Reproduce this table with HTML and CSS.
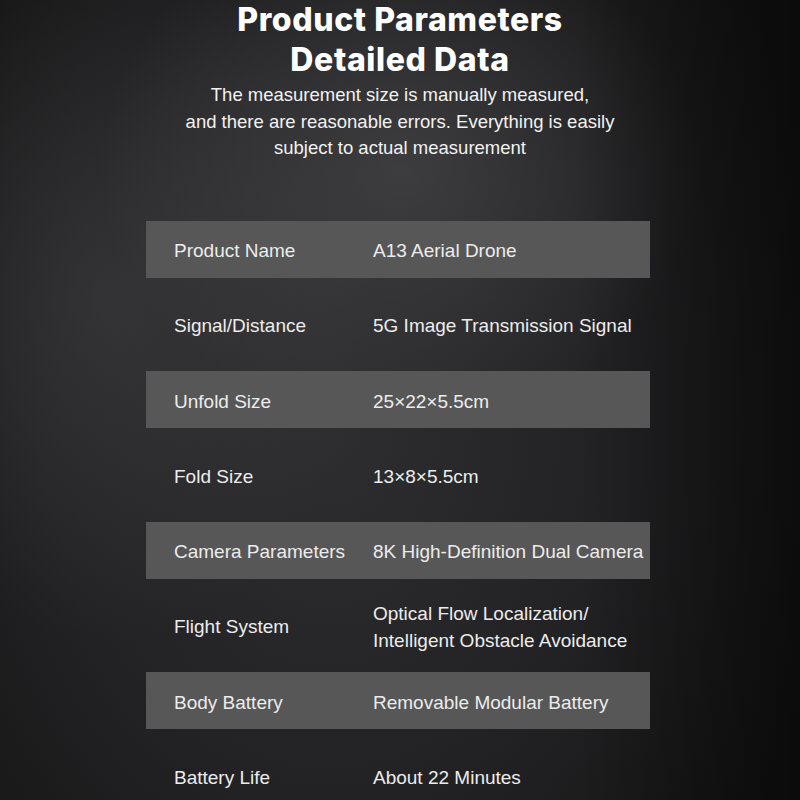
FILE: index.html
```html
<!DOCTYPE html>
<html lang="en">
<head>
<meta charset="utf-8">
<title>Product Parameters</title>
<link rel="stylesheet" href="styles.css">
</head>
<body>
<main class="page">
  <header class="intro">
    <h1 class="title">Product Parameters<br>Detailed Data</h1>
    <p class="note">The measurement size is manually measured,<br>and there are reasonable errors. Everything is easily<br>subject to actual measurement</p>
  </header>
  <section class="specs">
    <div class="row shade"><span class="label">Product Name</span><span class="value">A13 Aerial Drone</span></div>
    <div class="row"><span class="label">Signal/Distance</span><span class="value">5G Image Transmission Signal</span></div>
    <div class="row shade"><span class="label">Unfold Size</span><span class="value">25×22×5.5cm</span></div>
    <div class="row"><span class="label">Fold Size</span><span class="value">13×8×5.5cm</span></div>
    <div class="row shade"><span class="label">Camera Parameters</span><span class="value">8K High-Definition Dual Camera</span></div>
    <div class="row"><span class="label">Flight System</span><span class="value">Optical Flow Localization/<br>Intelligent Obstacle Avoidance</span></div>
    <div class="row shade"><span class="label">Body Battery</span><span class="value">Removable Modular Battery</span></div>
    <div class="row"><span class="label">Battery Life</span><span class="value">About 22 Minutes</span></div>
  </section>
</main>
</body>
</html>
```
FILE: styles.css
```css
html, body {
  margin: 0;
  padding: 0;
}
body {
  width: 800px;
  height: 800px;
  overflow: hidden;
  background-color: #161616;
  background-image:
    linear-gradient(90deg, rgba(0,0,0,0) 72%, rgba(0,0,0,0.45) 100%),
    radial-gradient(ellipse 300px 260px at 400px 170px, rgba(80,80,82,0.55), rgba(80,80,82,0) 100%),
    radial-gradient(ellipse 260px 340px at 110px 300px, rgba(70,70,72,0.45), rgba(70,70,72,0) 100%),
    radial-gradient(ellipse 520px 700px at 330px 420px, #2e2e30 0%, #222224 55%, #141414 100%);
  font-family: "Liberation Sans", Arial, sans-serif;
  color: #ececec;
}
.page {
  display: flex;
  flex-direction: column;
  align-items: center;
}
.intro {
  text-align: center;
}
.title {
  margin: 0;
  font-family: Inter, "Liberation Sans", sans-serif;
  font-weight: 800;
  font-size: 32px;
  line-height: 40px;
  letter-spacing: 0.6px;
  color: #ffffff;
}
.note {
  margin: 2px 0 0;
  font-size: 18.5px;
  line-height: 26.5px;
  color: #f2f2f2;
}
.specs {
  margin: 59px 4px 0 0;
  width: 504px;
  display: flex;
  flex-direction: column;
  gap: 18.3px;
}
.row {
  box-sizing: border-box;
  height: 57px;
  display: flex;
  align-items: center;
  padding: 3px 0 0 28px;
  font-size: 19px;
  line-height: 27px;
  color: #ececec;
}
.shade {
  background: #575757;
}
.label {
  width: 199px;
  flex: none;
}
.value {
  flex: 1;
  white-space: nowrap;
}
```
